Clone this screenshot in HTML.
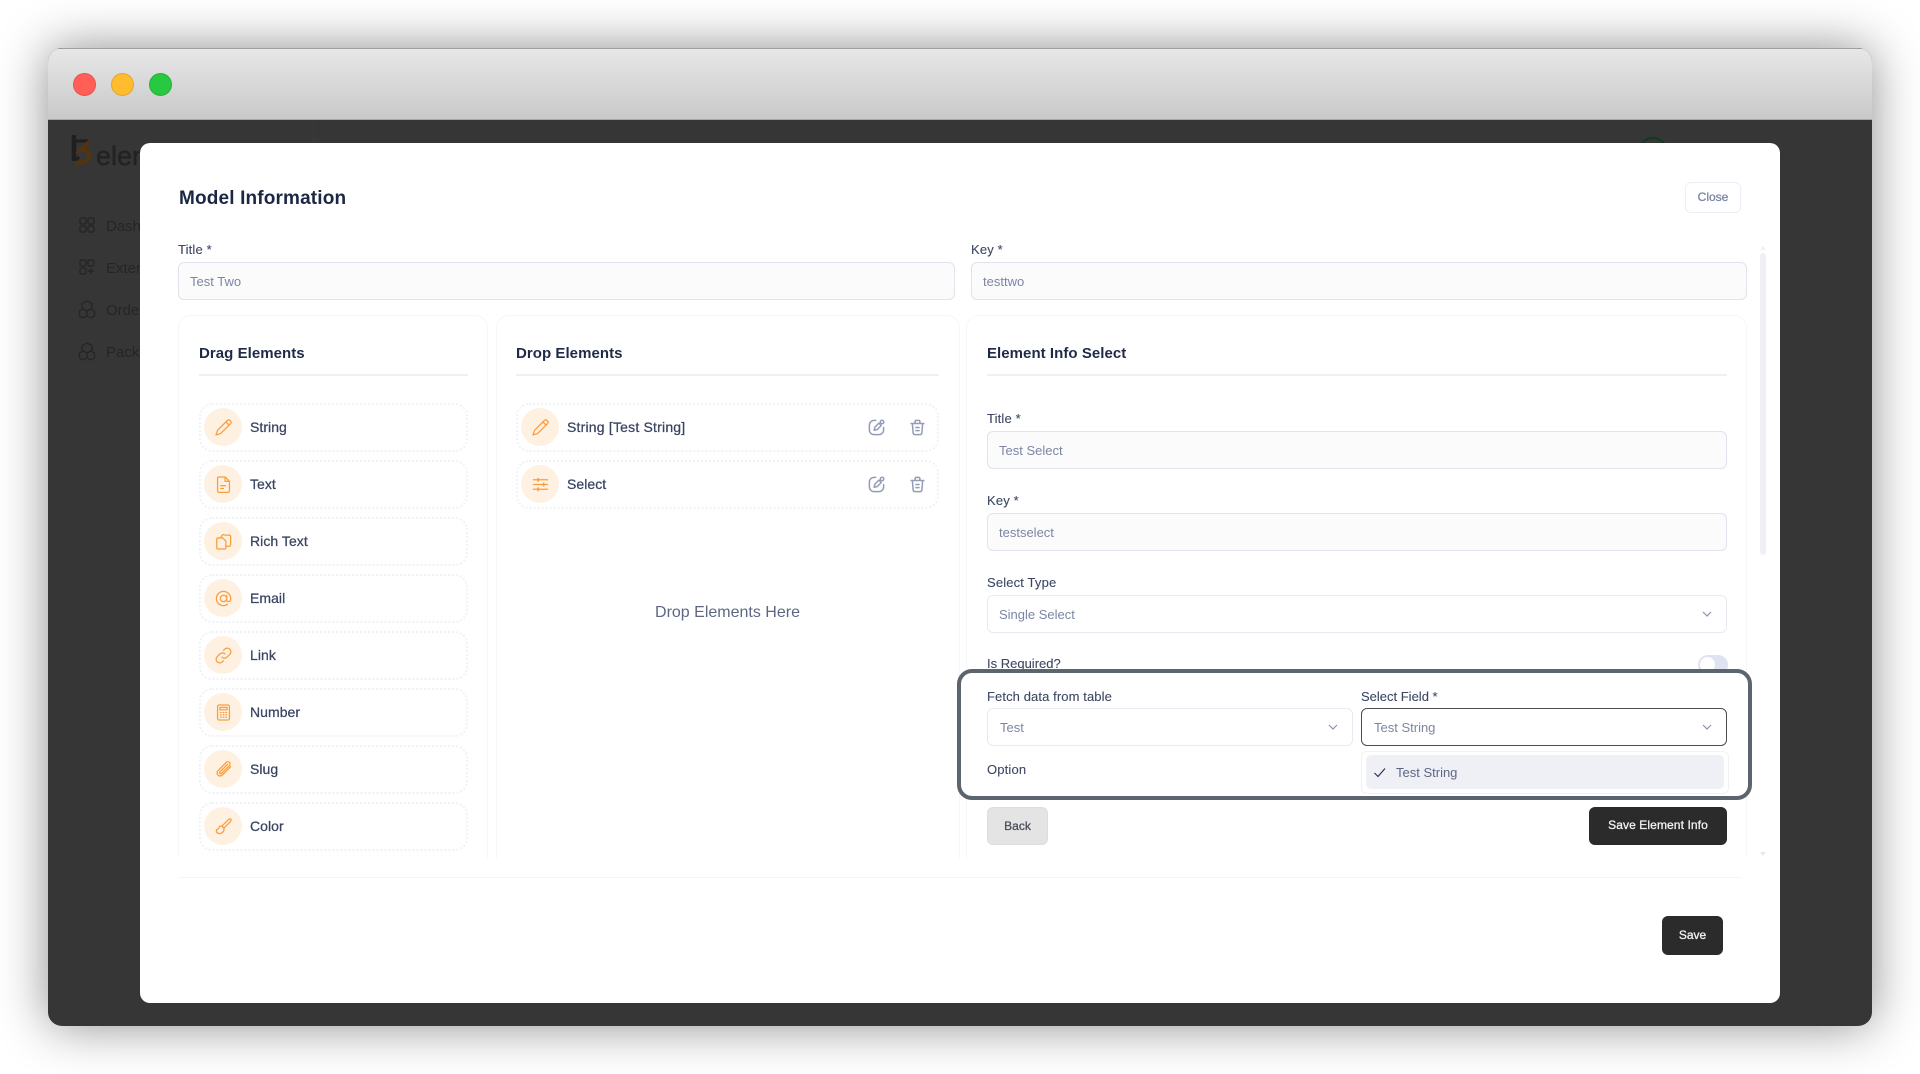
<!DOCTYPE html>
<html><head><meta charset="utf-8"><title>Model Information</title>
<style>
*{box-sizing:border-box}
html,body{margin:0;padding:0;background:#fff}
body{width:1920px;height:1074px;overflow:hidden;position:relative;font-family:"Liberation Sans",sans-serif}
.a{position:absolute}
.win{left:48px;top:48px;width:1824px;height:978px;border-radius:14px;background:#363636;box-shadow:0 0 50px rgba(0,0,0,.45);overflow:hidden}
.bar{left:0;top:0;width:1824px;height:72px;background:linear-gradient(#e7e7e7,#c9c9c9);border-top:1px solid #a0a0a0;border-bottom:1px solid #a8a8a8}
.dot{width:23px;height:23px;border-radius:50%;top:73px}
.side{color:#252525;font-size:15px;line-height:18px}
.modal{left:140px;top:143px;width:1640px;height:860px;background:#fff;border-radius:10px}
.h1{left:179px;top:188px;font-size:19px;font-weight:bold;color:#1c2745;line-height:22px;letter-spacing:.15px}
.lb{font-size:13px;line-height:16px;color:#3d4763;letter-spacing:.15px;white-space:nowrap;-webkit-text-stroke:.1px #3d4763}
.in{height:38px;background:#fbfbfc;border:1px solid #dfe3ec;border-radius:6px;font-size:13px;line-height:38px;color:#7c86a3;padding-left:11px}
.sel{background:#fff;border-color:#e8eaf2}
.clip{left:170px;top:300px;width:1590px;height:558px;overflow:hidden}
.pn{top:15px;height:600px;background:#fff;border:1px solid #f5f6f9;border-radius:13px}
.h2{font-size:15px;font-weight:bold;color:#1f2a47;line-height:18px;top:345px;letter-spacing:.05px}
.ln{top:374px;height:2px;background:#eff0f6}
.it{height:49px;border:2px dotted #f1f2f6;border-radius:13px}
.c{width:38px;height:38px;border-radius:50%;background:#fef1e2;display:flex;align-items:center;justify-content:center}
.c svg{width:19px;height:19px;fill:none;stroke:#fb9d3c;stroke-width:1.6;stroke-linecap:round;stroke-linejoin:round}
.t{font-size:14px;line-height:18px;color:#3a4462;-webkit-text-stroke:.25px #3a4462;white-space:nowrap;letter-spacing:.05px}
.gi{width:19px;height:19px;fill:none;stroke:#959db6;stroke-width:1.9;stroke-linecap:round;stroke-linejoin:round}
.ch{width:12px;height:12px;fill:none;stroke:#8a92aa;stroke-width:1.2}
.btn{border-radius:6px;text-align:center;font-size:12px;-webkit-text-stroke:.3px currentColor}
</style></head><body>
<div class="a win">
<div class="a bar"></div>
<div class="a" style="left:265px;top:72px;width:1px;height:24px;background:#3a3a3a"></div>
</div>
<div class="a dot" style="left:73px;background:#ff5f57;border:1px solid #e8524b"></div>
<div class="a dot" style="left:111px;background:#febc2e;border:1px solid #e5a728"></div>
<div class="a dot" style="left:149px;background:#28c840;border:1px solid #23b338"></div>

<svg class="a" style="left:68px;top:132px" width="26" height="36" viewBox="0 0 26 36" fill="none"><path d="M6 3v26" stroke="#1f1f1f" stroke-width="4.500"/><path d="M4 9h16" stroke="#1f1f1f" stroke-width="3"/><path d="M8 28l3-3" stroke="#1f1f1f" stroke-width="3"/><path d="M21 10l-8 8c5-1 9 1 8.500 5-.5 5-6 8-14 8" stroke="#54340f" stroke-width="4"/></svg>
<div class="a" style="left:96px;top:139px;font-size:27px;line-height:34px;color:#232323;-webkit-text-stroke:.5px #232323;white-space:nowrap">elem</div>
<svg class="a" style="left:78px;top:216px" width="18" height="125" viewBox="0 0 18 125" fill="none" stroke="#262626" stroke-width="1.4"><rect x="2" y="2" width="6" height="6" rx="1.500"/><rect x="10" y="2" width="6" height="6" rx="1.500"/><rect x="2" y="10" width="6" height="6" rx="1.500"/><rect x="10" y="10" width="6" height="6" rx="1.500"/><rect x="2" y="44" width="6" height="6" rx="1.500"/><rect x="10" y="44" width="6" height="6" rx="1.500"/><rect x="2" y="52" width="6" height="6" rx="1.500"/><path d="M13 52v6M10 55h6"/><path d="M9 85l5 2.500v5l-5 2.500-5-2.500v-5zM5 93l4 2v5l-4 2-3.500-2v-5zM13 93l3.500 2v5l-3.500 2-4-2v-5z"/></svg>
<svg class="a" style="left:78px;top:341px" width="18" height="22" viewBox="0 0 18 22" fill="none" stroke="#262626" stroke-width="1.4"><path d="M9 2l5 2.500v5L9 12 4 9.500v-5zM5 10l4 2v5l-4 2-3.500-2v-5zM13 10l3.500 2v5l-3.500 2-4-2v-5z"/></svg>
<div class="a side" style="left:106px;top:218px">Dash</div>
<div class="a side" style="left:106px;top:260px">Exten</div>
<div class="a side" style="left:106px;top:302px">Order</div>
<div class="a side" style="left:106px;top:344px">Pack</div>
<div class="a" style="left:1638px;top:137px;width:30px;height:30px;border-radius:50%;border:2px solid #0d3b1c"></div>

<div class="a modal"></div>
<div class="a h1">Model Information</div>
<div class="a btn" style="left:1685px;top:182px;width:56px;height:31px;border:1.5px solid #eceef5;line-height:28px;color:#7d86a3">Close</div>

<div class="a lb" style="left:178px;top:242px">Title *</div>
<div class="a in" style="left:178px;top:262px;width:777px">Test Two</div>
<div class="a lb" style="left:971px;top:242px">Key *</div>
<div class="a in" style="left:971px;top:262px;width:776px">testtwo</div>

<div class="a clip">
<div class="a pn" style="left:8px;width:310px"></div>
<div class="a pn" style="left:326px;width:464px"></div>
<div class="a pn" style="left:796px;width:781px"></div>
</div>

<div class="a h2" style="left:199px">Drag Elements</div>
<div class="a ln" style="left:199px;width:269px"></div>
<div class="a h2" style="left:516px">Drop Elements</div>
<div class="a ln" style="left:516px;width:423px"></div>
<div class="a h2" style="left:987px">Element Info Select</div>
<div class="a ln" style="left:987px;width:740px"></div>

<div class="a it" style="left:199px;top:403px;width:269px"></div>
<div class="a c" style="left:204px;top:408px"><svg viewBox="0 0 24 24"><path d="M2.500 21.500l2-6L17 3a2.200 2.200 0 0 1 3 0l1 1a2.200 2.200 0 0 1 0 3L8.500 19.500z"/><path d="M15 5l4 4"/></svg></div>
<div class="a t" style="left:250px;top:418px">String</div>

<div class="a it" style="left:199px;top:460px;width:269px"></div>
<div class="a c" style="left:204px;top:465px"><svg viewBox="0 0 24 24"><path d="M6 2.500h8l5.500 5.500v12a2 2 0 0 1-2 2h-11a2 2 0 0 1-2-2V4a1.500 1.500 0 0 1 1.500-1.500z"/><path d="M14 2.500V8h5.500M8.500 13.500h6M8.500 17h3.500"/></svg></div>
<div class="a t" style="left:250px;top:475px">Text</div>

<div class="a it" style="left:199px;top:517px;width:269px"></div>
<div class="a c" style="left:204px;top:522px"><svg viewBox="0 0 24 24"><path d="M5 7.500h6l4 4V20a1.500 1.500 0 0 1-1.500 1.500H5A1.500 1.500 0 0 1 3.500 20V9A1.500 1.500 0 0 1 5 7.500z"/><path d="M8.500 7.500l1.500-3a2 2 0 0 1 2.500-1l1.500.5h5A1.500 1.500 0 0 1 21 5.500V16a2 2 0 0 1-2 2h-4"/></svg></div>
<div class="a t" style="left:250px;top:532px">Rich Text</div>

<div class="a it" style="left:199px;top:574px;width:269px"></div>
<div class="a c" style="left:204px;top:579px"><svg viewBox="0 0 24 24"><circle cx="12" cy="12" r="4"/><path d="M16 8v5.500a2.500 2.500 0 0 0 5 0V12a9 9 0 1 0-4 7.500"/></svg></div>
<div class="a t" style="left:250px;top:589px">Email</div>

<div class="a it" style="left:199px;top:631px;width:269px"></div>
<div class="a c" style="left:204px;top:636px"><svg viewBox="0 0 24 24"><path d="M10 14a4.500 4.500 0 0 0 6.500 0l3.500-3.500a4.500 4.500 0 0 0-6.500-6.500l-1.500 1.500"/><path d="M14 10a4.500 4.500 0 0 0-6.500 0L4 13.500a4.500 4.500 0 0 0 6.500 6.500l1.500-1.500"/></svg></div>
<div class="a t" style="left:250px;top:646px">Link</div>

<div class="a it" style="left:199px;top:688px;width:269px"></div>
<div class="a c" style="left:204px;top:693px"><svg viewBox="0 0 24 24"><rect x="4.500" y="2.500" width="15" height="19" rx="2"/><rect x="7.500" y="5.500" width="9" height="3"/><path d="M8 12h1M11.500 12h1M15 12h1M8 15h1M11.500 15h1M15 15h1M8 18h1M11.500 18h1M15 18h1"/></svg></div>
<div class="a t" style="left:250px;top:703px">Number</div>

<div class="a it" style="left:199px;top:745px;width:269px"></div>
<div class="a c" style="left:204px;top:750px"><svg viewBox="0 0 24 24"><path d="M21 8.500L10.500 19a3.800 3.800 0 0 1-5.500-5.500L15.500 3a2.700 2.700 0 0 1 4 4L9.500 17a1.200 1.200 0 0 1-2-2L17 5.500"/></svg></div>
<div class="a t" style="left:250px;top:760px">Slug</div>

<div class="a it" style="left:199px;top:802px;width:269px"></div>
<div class="a c" style="left:204px;top:807px"><svg viewBox="0 0 24 24"><path d="M21 2.500c1 1 .5 2.500-.5 3.500L12.500 14 10 11.500l8-8c1-1 2-1.800 3-1z"/><path d="M10 11.500c-2-.5-3.500.5-4 2.500-.5 1.500-1.500 1.500-2.500 2-1.500 2 .5 5 3.500 5 3.500 0 6.500-3.500 5.500-7z"/></svg></div>
<div class="a t" style="left:250px;top:817px">Color</div>

<div class="a it" style="left:516px;top:403px;width:423px"></div>
<div class="a c" style="left:521px;top:408px"><svg viewBox="0 0 24 24"><path d="M2.500 21.500l2-6L17 3a2.200 2.200 0 0 1 3 0l1 1a2.200 2.200 0 0 1 0 3L8.500 19.500z"/><path d="M15 5l4 4"/></svg></div>
<div class="a t" style="left:567px;top:418px;letter-spacing:.2px">String [Test String]</div>
<svg class="a gi" style="left:867px;top:418px" viewBox="0 0 24 24"><path d="M11 3H9a6 6 0 0 0-6 6v6a6 6 0 0 0 6 6h6a6 6 0 0 0 6-6v-3"/><path d="M9 15.500l1-4 5-5 3 3-5 5z"/><circle cx="19" cy="5" r="2.200"/></svg>
<svg class="a gi" style="left:908px;top:418px" viewBox="0 0 24 24"><path d="M4 7h16M9 7V4.500A1.500 1.500 0 0 1 10.500 3h3A1.500 1.500 0 0 1 15 4.500V7M5.500 7l1 12a2.500 2.500 0 0 0 2.500 2h6a2.500 2.500 0 0 0 2.500-2l1-12M10 12h4M10 16h4"/></svg>

<div class="a it" style="left:516px;top:460px;width:423px"></div>
<div class="a c" style="left:521px;top:465px"><svg viewBox="0 0 24 24"><path d="M3 6h18M3 12h18M3 18h18"/><path d="M9 4.500v3M16 10.500v3M9 16.500v3" stroke-width="2.200"/></svg></div>
<div class="a t" style="left:567px;top:475px">Select</div>
<svg class="a gi" style="left:867px;top:475px" viewBox="0 0 24 24"><path d="M11 3H9a6 6 0 0 0-6 6v6a6 6 0 0 0 6 6h6a6 6 0 0 0 6-6v-3"/><path d="M9 15.500l1-4 5-5 3 3-5 5z"/><circle cx="19" cy="5" r="2.200"/></svg>
<svg class="a gi" style="left:908px;top:475px" viewBox="0 0 24 24"><path d="M4 7h16M9 7V4.500A1.500 1.500 0 0 1 10.500 3h3A1.500 1.500 0 0 1 15 4.500V7M5.500 7l1 12a2.500 2.500 0 0 0 2.500 2h6a2.500 2.500 0 0 0 2.500-2l1-12M10 12h4M10 16h4"/></svg>

<div class="a" style="left:516px;top:603px;width:423px;text-align:center;font-size:16px;line-height:19px;color:#5d6784">Drop Elements Here</div>

<div class="a lb" style="left:987px;top:411px">Title *</div>
<div class="a in" style="left:987px;top:431px;width:740px">Test Select</div>
<div class="a lb" style="left:987px;top:493px">Key *</div>
<div class="a in" style="left:987px;top:513px;width:740px">testselect</div>
<div class="a lb" style="left:987px;top:575px">Select Type</div>
<div class="a in sel" style="left:987px;top:595px;width:740px">Single Select</div>
<svg class="a ch" style="left:1701px;top:608px" viewBox="0 0 12 12"><path d="M2 4l4 4 4-4"/></svg>
<div class="a lb" style="left:987px;top:656px;letter-spacing:0">Is Required?</div>
<div class="a" style="left:1698px;top:655px;width:30px;height:20px;border-radius:10px;background:#dfe3ef"></div>
<div class="a" style="left:1700px;top:657px;width:15px;height:15px;border-radius:50%;background:#fff"></div>

<div class="a" style="left:957px;top:669px;width:795px;height:131px;background:#fff;border:4px solid #5c656d;border-radius:15px"></div>
<div class="a lb" style="left:987px;top:689px;letter-spacing:.1px">Fetch data from table</div>
<div class="a in sel" style="left:987px;top:708px;width:366px;background:#fff;padding-left:12px">Test</div>
<svg class="a ch" style="left:1327px;top:721px" viewBox="0 0 12 12"><path d="M2 4l4 4 4-4"/></svg>
<div class="a lb" style="left:1361px;top:689px;letter-spacing:0">Select Field *</div>
<div class="a in" style="left:1361px;top:708px;width:366px;background:#fff;border:1px solid #4d4d4d;padding-left:12px">Test String</div>
<svg class="a ch" style="left:1701px;top:721px" viewBox="0 0 12 12"><path d="M2 4l4 4 4-4"/></svg>
<div class="a lb" style="left:987px;top:762px">Option</div>
<div class="a" style="left:1361px;top:751px;width:368px;height:43px;background:#fff;border:1px solid #f0f1f5;border-radius:6px"></div>
<div class="a" style="left:1366px;top:755px;width:358px;height:34px;background:#eef0f6;border-radius:5px"></div>
<svg class="a" style="left:1373px;top:766px" width="13" height="13" viewBox="0 0 13 13" fill="none" stroke="#2b3452" stroke-width="1.200"><path d="M1.500 7l3.500 3.500 7-8"/></svg>
<div class="a" style="left:1396px;top:764px;font-size:13px;line-height:18px;color:#5d6784">Test String</div>

<div class="a btn" style="left:987px;top:807px;width:61px;height:38px;background:#e4e4e4;border:1px solid #dedede;line-height:36px;color:#4a4f5c">Back</div>
<div class="a btn" style="left:1589px;top:807px;width:138px;height:38px;background:#2b2b2b;line-height:37px;color:#f2f2f2;letter-spacing:.1px">Save Element Info</div>
<div class="a btn" style="left:1662px;top:916px;width:61px;height:39px;background:#2b2b2b;line-height:38px;color:#f2f2f2">Save</div>

<div class="a" style="left:1760px;top:253px;width:6px;height:302px;background:#eff0f3;border-radius:3px"></div>
<div class="a" style="left:1760px;top:246px;width:0;height:0;border-left:3px solid transparent;border-right:3px solid transparent;border-bottom:4px solid #eff0f3"></div>
<div class="a" style="left:1760px;top:852px;width:0;height:0;border-left:3px solid transparent;border-right:3px solid transparent;border-top:4px solid #e6e7ea"></div>
<div class="a" style="left:178px;top:877px;width:1564px;height:1px;background:#f5f5f7"></div>
</body></html>
